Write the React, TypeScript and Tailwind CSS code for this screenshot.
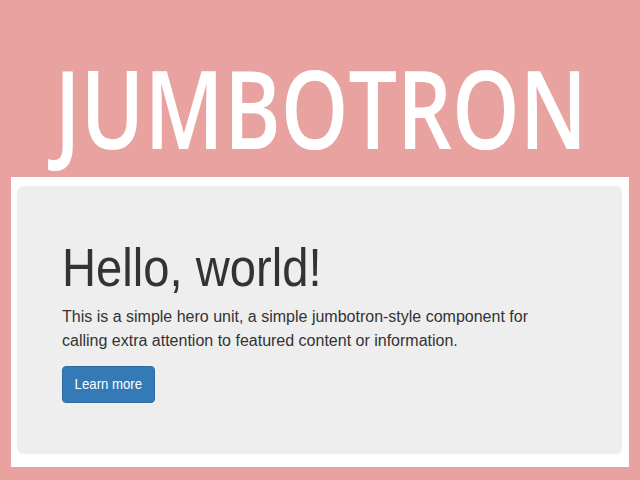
import React from "react";

export default function App() {
  return (
    <div className="w-[640px] h-[480px] bg-[#e8a2a0] overflow-hidden">
      <div className="h-[177px] flex justify-center pt-[52px] pl-[3px]">
        <h1 className="text-white text-[109px] font-semibold leading-none scale-x-79 whitespace-nowrap [font-family:'Open_Sans',sans-serif]">
          JUMBOTRON
        </h1>
      </div>
      <div className="ml-[11px] w-[618px] h-[290px] bg-white pl-[6px] pr-[7px] pt-[9px] pb-[13px]">
        <div className="h-full bg-[#eeeeee] rounded-[6px] pl-[45px] pt-[55px] text-[#333333] [font-family:'Liberation_Sans',Arial,sans-serif]">
          <h2 className="text-[53px] leading-none scale-x-89 origin-left whitespace-nowrap">Hello, world!</h2>
          <p className="mt-[11px] text-[16px] leading-[24px] max-w-[480px]">
            This is a simple hero unit, a simple jumbotron-style component for
            calling extra attention to featured content or information.
          </p>
          <button className="mt-[13px] w-[93px] h-[37px] flex items-center justify-center text-white bg-[#337ab7] border border-[#2e6da4] rounded-[4px]">
            <span className="text-[15px] scale-x-88 whitespace-nowrap">Learn more</span>
          </button>
        </div>
      </div>
    </div>
  );
}
